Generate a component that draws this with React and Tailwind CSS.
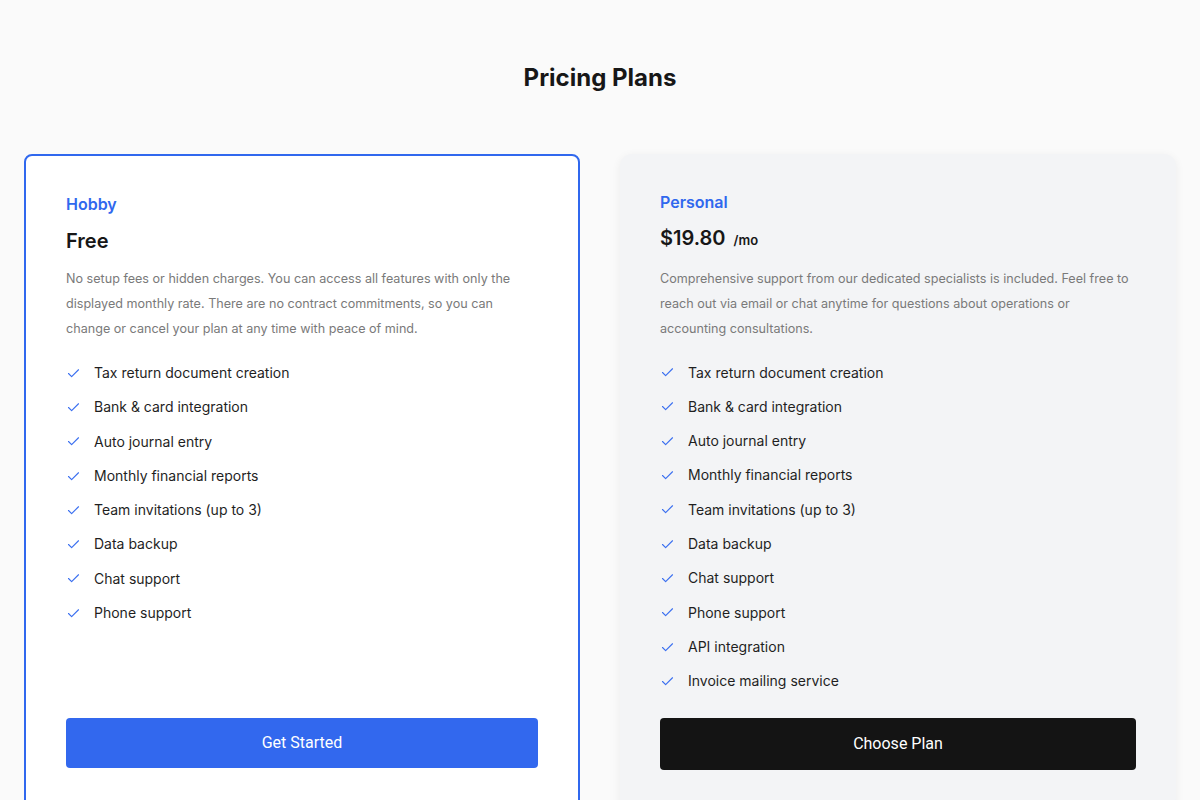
import React from "react";

const features = [
  "Tax return document creation",
  "Bank & card integration",
  "Auto journal entry",
  "Monthly financial reports",
  "Team invitations (up to 3)",
  "Data backup",
  "Chat support",
  "Phone support",
];

function CheckIcon() {
  return (
    <svg width="15" height="15" viewBox="0 0 24 24" fill="none" stroke="#3a6ff0" strokeWidth="1.8" strokeLinecap="round" strokeLinejoin="round" className="shrink-0">
      <path d="M20 6 9 17l-5-5" />
    </svg>
  );
}

function Features({ items }) {
  return (
    <ul className="flex flex-col gap-[14px]">
      {items.map((f) => (
        <li key={f} className="flex items-center gap-[13px] text-[14px] leading-[20.3px] text-[#1f1f1f]">
          <CheckIcon />
          <span>{f}</span>
        </li>
      ))}
    </ul>
  );
}

export default function App() {
  return (
    <div className="min-h-screen bg-[#fafafa] px-6 pt-[61px] pb-10" style={{ fontFamily: "Inter, 'Noto Sans', sans-serif" }}>
      <h1 className="text-center text-[24px] leading-[34px] font-bold text-[#171717]">Pricing Plans</h1>
      <div className="mt-[59px] grid grid-cols-2 gap-10">
        <div className="flex flex-col rounded-[8px] border-2 border-[#3068ee] bg-white p-10">
          <div className="text-[16px] leading-[16px] font-semibold text-[#3068ee]">Hobby</div>
          <div className="mt-[17px] text-[20px] leading-[24px] font-semibold text-[#171717]">Free</div>
          <p className="mt-[13px] text-[12.6px] leading-[25px] text-[#7a7a7a]">
            No setup fees or hidden charges. You can access all features with only the displayed monthly rate. There are no contract commitments, so you can change or cancel your plan at any time with peace of mind.
          </p>
          <div className="mt-[22px]">
            <Features items={features} />
          </div>
          <button className="mt-auto h-[50px] w-full rounded-[4px] bg-[#3268ee] text-[16px] font-normal text-white" style={{ fontFamily: "Roboto, sans-serif" }}>
            Get Started
          </button>
        </div>
        <div className="flex flex-col rounded-[12px] bg-[#f3f4f6] p-10 shadow-[0_2px_10px_rgba(0,0,0,0.06)]">
          <div className="text-[16px] leading-[16px] font-semibold text-[#3068ee]">Personal</div>
          <div className="mt-[16px] flex items-baseline gap-[8px] text-[#171717]">
            <span className="text-[20px] leading-[24px] font-semibold">$19.80</span>
            <span className="text-[13px] font-semibold">/mo</span>
          </div>
          <p className="mt-[15px] text-[12.6px] leading-[25px] text-[#7a7a7a]">
            Comprehensive support from our dedicated specialists is included. Feel free to reach out via email or chat anytime for questions about operations or accounting consultations.
          </p>
          <div className="mt-[22px]">
            <Features items={[...features, "API integration", "Invoice mailing service"]} />
          </div>
          <button className="mt-[27px] h-[52px] w-full rounded-[4px] bg-[#141414] text-[16px] font-normal text-white" style={{ fontFamily: "Roboto, sans-serif" }}>
            Choose Plan
          </button>
        </div>
      </div>
    </div>
  );
}
